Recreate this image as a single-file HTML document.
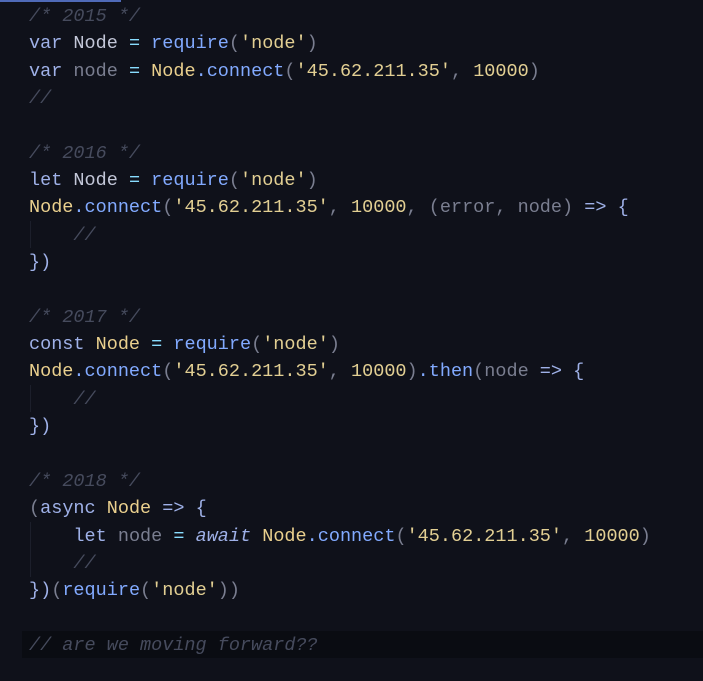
<!DOCTYPE html>
<html><head><style>
html,body{margin:0;padding:0;background:#0f111a;width:703px;height:681px;overflow:hidden}
pre{margin:0;position:absolute;left:29px;top:3px;font-family:"Liberation Mono",monospace;font-size:18.5px;line-height:27.35px;color:#c3c7d8}
.c{color:#464b5d;font-style:italic}
.k{color:#9fb1e8}
.f{color:#82aaff}
.s{color:#e2cf93}
.y{color:#ead08e}
.g{color:#7a7e90}
.p{color:#89ddff}
.i{color:#9fb1e8;font-style:italic}
.w{color:#c3c7d8}
.bar{position:absolute;left:0;top:0;width:121px;height:2px;background:#4f6ab8}
.hl{position:absolute;left:22px;top:631px;width:681px;height:27px;background:#0a0c12}
.guide{position:absolute;left:30px;width:1px;background:#1c1f2b}
</style></head><body>
<div class="bar"></div>
<div class="hl"></div>
<div class="guide" style="top:221px;height:27px"></div>
<div class="guide" style="top:385px;height:27px"></div>
<div class="guide" style="top:522px;height:55px"></div>
<pre><span class="c">/* 2015 */</span>
<span class="k">var</span> <span class="w">Node</span> <span class="p">=</span> <span class="f">require</span><span class="g">(</span><span class="s">'node'</span><span class="g">)</span>
<span class="k">var</span> <span class="g">node</span> <span class="p">=</span> <span class="y">Node</span><span class="f">.connect</span><span class="g">(</span><span class="s">'45.62.211.35'</span><span class="g">,</span> <span class="s">10000</span><span class="g">)</span>
<span class="c">//</span>

<span class="c">/* 2016 */</span>
<span class="k">let</span> <span class="w">Node</span> <span class="p">=</span> <span class="f">require</span><span class="g">(</span><span class="s">'node'</span><span class="g">)</span>
<span class="y">Node</span><span class="f">.connect</span><span class="g">(</span><span class="s">'45.62.211.35'</span><span class="g">,</span> <span class="s">10000</span><span class="g">,</span> <span class="g">(</span><span class="g">error</span><span class="g">,</span> <span class="g">node</span><span class="g">)</span> <span class="k">=&gt;</span> <span class="k">{</span>
    <span class="c">//</span>
<span class="k">})</span>

<span class="c">/* 2017 */</span>
<span class="k">const</span> <span class="y">Node</span> <span class="p">=</span> <span class="f">require</span><span class="g">(</span><span class="s">'node'</span><span class="g">)</span>
<span class="y">Node</span><span class="f">.connect</span><span class="g">(</span><span class="s">'45.62.211.35'</span><span class="g">,</span> <span class="s">10000</span><span class="g">)</span><span class="f">.then</span><span class="g">(</span><span class="g">node</span> <span class="k">=&gt;</span> <span class="k">{</span>
    <span class="c">//</span>
<span class="k">})</span>

<span class="c">/* 2018 */</span>
<span class="g">(</span><span class="k">async</span> <span class="y">Node</span> <span class="k">=&gt;</span> <span class="k">{</span>
    <span class="k">let</span> <span class="g">node</span> <span class="p">=</span> <span class="i">await</span> <span class="y">Node</span><span class="f">.connect</span><span class="g">(</span><span class="s">'45.62.211.35'</span><span class="g">,</span> <span class="s">10000</span><span class="g">)</span>
    <span class="c">//</span>
<span class="k">})</span><span class="g">(</span><span class="f">require</span><span class="g">(</span><span class="s">'node'</span><span class="g">))</span>

<span class="c">// are we moving forward??</span>
</pre>
</body></html>
